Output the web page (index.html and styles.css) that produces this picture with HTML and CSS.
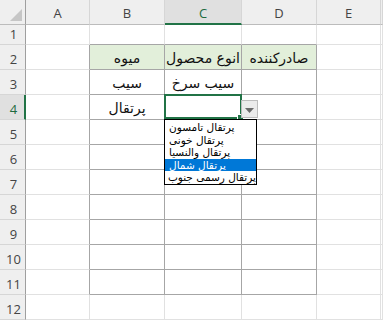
FILE: index.html
```html
<!DOCTYPE html>
<html lang="fa">
<head>
<meta charset="UTF-8">
<title>Sheet</title>
<link rel="stylesheet" href="styles.css">
</head>
<body>
<div class="sheet">
    <div class="grid">
        <!-- header row -->
        <div class="corner">
            <svg width="26" height="25" viewBox="0 0 26 25"><polygon points="10,21 22,21 22,9" fill="#c6c6c6"/></svg>
        </div>
        <div class="colh">A</div>
        <div class="colh">B</div>
        <div class="colh sel">C</div>
        <div class="colh">D</div>
        <div class="colh">E</div>
        <div class="colh"></div>

        <!-- 1 -->
        <div class="rowh">1</div>
        <div class="c"></div>
        <div class="c bd"></div>
        <div class="c bd"></div>
        <div class="c bd"></div>
        <div class="c"></div>
        <div class="c"></div>

        <!-- 2 -->
        <div class="rowh">2</div>
        <div class="c rd"></div>
        <div class="c rd bd g">میوه</div>
        <div class="c rd bd g">انوع محصول</div>
        <div class="c rd bd g">صادرکننده</div>
        <div class="c"></div>
        <div class="c"></div>

        <!-- 3 -->
        <div class="rowh">3</div>
        <div class="c rd"></div>
        <div class="c rd bd">سیب</div>
        <div class="c rd bd">سیب سرخ</div>
        <div class="c rd bd"></div>
        <div class="c"></div>
        <div class="c"></div>

        <!-- 4 -->
        <div class="rowh sel">4</div>
        <div class="c rd"></div>
        <div class="c rd bd">پرتقال</div>
        <div class="c rd bd"></div>
        <div class="c rd bd"></div>
        <div class="c"></div>
        <div class="c"></div>

        <!-- 5 -->
        <div class="rowh">5</div>
        <div class="c rd"></div>
        <div class="c rd bd"></div>
        <div class="c rd bd"></div>
        <div class="c rd bd"></div>
        <div class="c"></div>
        <div class="c"></div>

        <!-- 6 -->
        <div class="rowh">6</div>
        <div class="c rd"></div>
        <div class="c rd bd"></div>
        <div class="c rd bd"></div>
        <div class="c rd bd"></div>
        <div class="c"></div>
        <div class="c"></div>

        <!-- 7 -->
        <div class="rowh">7</div>
        <div class="c rd"></div>
        <div class="c rd bd"></div>
        <div class="c rd bd"></div>
        <div class="c rd bd"></div>
        <div class="c"></div>
        <div class="c"></div>

        <!-- 8 -->
        <div class="rowh">8</div>
        <div class="c rd"></div>
        <div class="c rd bd"></div>
        <div class="c rd bd"></div>
        <div class="c rd bd"></div>
        <div class="c"></div>
        <div class="c"></div>

        <!-- 9 -->
        <div class="rowh">9</div>
        <div class="c rd"></div>
        <div class="c rd bd"></div>
        <div class="c rd bd"></div>
        <div class="c rd bd"></div>
        <div class="c"></div>
        <div class="c"></div>

        <!-- 10 -->
        <div class="rowh">10</div>
        <div class="c rd"></div>
        <div class="c rd bd"></div>
        <div class="c rd bd"></div>
        <div class="c rd bd"></div>
        <div class="c"></div>
        <div class="c"></div>

        <!-- 11 -->
        <div class="rowh">11</div>
        <div class="c rd"></div>
        <div class="c rd bd"></div>
        <div class="c rd bd"></div>
        <div class="c rd bd"></div>
        <div class="c"></div>
        <div class="c"></div>

        <!-- 12 -->
        <div class="rowh">12</div>
        <div class="c"></div>
        <div class="c"></div>
        <div class="c"></div>
        <div class="c"></div>
        <div class="c"></div>
        <div class="c"></div>
    </div>

    <!-- celda activa C4 y su lista -->
    <div class="active-cell"><span class="handle"></span></div>
    <div class="drop-btn">
        <svg width="9" height="5" viewBox="0 0 9 5"><polygon points="0,0 9,0 4.5,5" fill="#6b6b6b"/></svg>
    </div>
    <ul class="drop-list">
        <li>پرتقال تامسون</li>
        <li>پرتقال خونی</li>
        <li>پرتقال والنسیا</li>
        <li class="on">پرتقال شمال</li>
        <li>پرتقال رسمی جنوب</li>
    </ul>
</div>
</body>
</html>
```

FILE: styles.css
```css
body {
    margin: 0;
    padding: 0;
    background: #fff;
    overflow: hidden;
}
.sheet {
    position: relative;
    width: 383px;
    height: 323px;
    overflow: hidden;
}
.grid {
    display: grid;
    grid-template-columns: 26px 64px 75px 77px 75px 64px 1fr;
    grid-template-rows: 25px 20px repeat(12, 25px);
}
.grid > div {
    box-sizing: border-box;
}

/* encabezados */
.corner {
    background: #efefef;
    border-right: 1px solid #9f9f9f;
    border-bottom: 1px solid #bcbcbc;
}
.corner svg {
    display: block;
}
.colh {
    background: #efefef;
    border-right: 1px solid #d6d6d6;
    border-bottom: 1px solid #bcbcbc;
    color: #444;
    font-family: "Open Sans", "DejaVu Sans", sans-serif;
    font-size: 13px;
    display: flex;
    align-items: center;
    justify-content: center;
    padding-top: 1px;
}
.colh.sel {
    background: #e0e0e0;
    color: #1e6b3f;
    border-bottom: 2px solid #217346;
    padding-top: 2px;
}
.rowh {
    background: #efefef;
    border-right: 1px solid #9f9f9f;
    border-bottom: 1px solid #d6d6d6;
    color: #444;
    font-family: "Open Sans", "DejaVu Sans", sans-serif;
    font-size: 13px;
    display: flex;
    align-items: flex-end;
    justify-content: center;
    padding-bottom: 1px;
    padding-left: 2px;
}
.rowh.sel {
    background: #e0e0e0;
    color: #1e6b3f;
    border-right: 2px solid #217346;
    padding-left: 3px;
}

/* celdas */
.c {
    border-right: 1px solid #e1e1e1;
    border-bottom: 1px solid #e1e1e1;
    font-family: "DejaVu Sans", sans-serif;
    font-size: 14px;
    color: #111;
    direction: rtl;
    display: flex;
    align-items: flex-end;
    justify-content: center;
    padding-bottom: 3px;
    white-space: nowrap;
}
.c.rd {
    border-right-color: #a6a6a6;
}
.c.bd {
    border-bottom-color: #a6a6a6;
}
.c.g {
    background: #e2efda;
}

/* seleccion */
.active-cell {
    position: absolute;
    left: 164px;
    top: 94px;
    width: 78px;
    height: 25px;
    box-sizing: border-box;
    border: 2px solid #217346;
}
.handle {
    position: absolute;
    right: -4px;
    bottom: -4px;
    width: 5px;
    height: 5px;
    background: #217346;
    border: 1px solid #fff;
}
.drop-btn {
    position: absolute;
    left: 241px;
    top: 100px;
    width: 17px;
    height: 18px;
    box-sizing: border-box;
    background: #ebebeb;
    border: 1px solid #bdbdbd;
    display: flex;
    align-items: center;
    justify-content: center;
    padding-top: 2px;
}
.drop-btn svg {
    display: block;
}
.drop-list {
    position: absolute;
    left: 164px;
    top: 119px;
    width: 93px;
    height: 66px;
    box-sizing: border-box;
    margin: 0;
    padding: 1px 0 0;
    list-style: none;
    background: #fff;
    border: 1px solid #000;
    font-family: "DejaVu Sans", sans-serif;
    font-size: 10.5px;
    color: #000;
}
.drop-list li {
    height: 12.6px;
    line-height: 12.6px;
    direction: rtl;
    text-align: left;
    padding-left: 4px;
    white-space: nowrap;
}
.drop-list li.on {
    background: #0078d7;
    color: #fff;
}
```
